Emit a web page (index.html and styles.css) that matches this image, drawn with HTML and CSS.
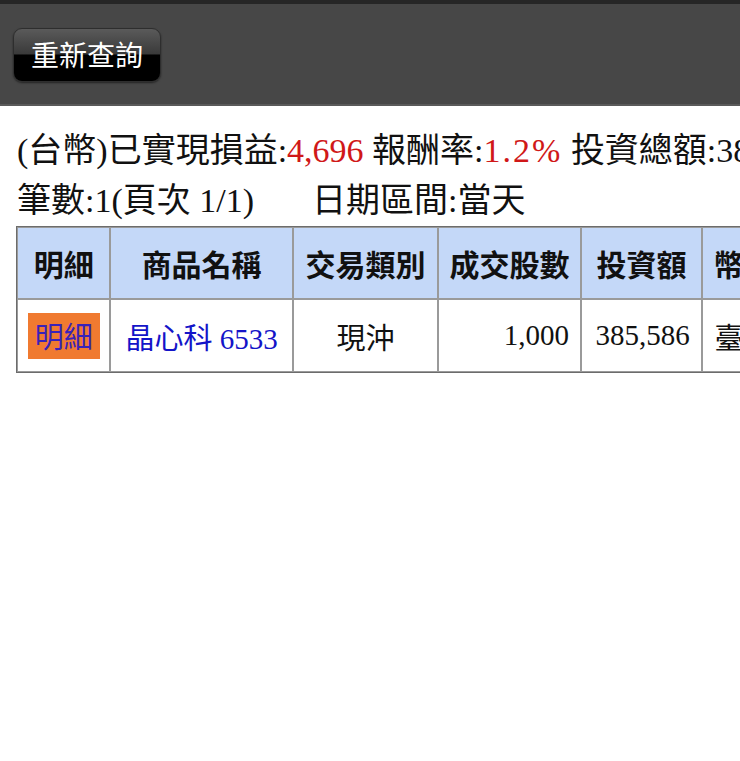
FILE: index.html
```html
<!DOCTYPE html>
<html lang="zh-Hant">
<head>
<meta charset="utf-8">
<title>已實現損益</title>
<link rel="stylesheet" href="styles.css">
</head>
<body>
<div class="topbar">
  <button class="query-btn" type="button">重新查詢</button>
</div>
<div class="content">
  <div class="summary">(台幣)已實現損益:<span class="red">4,696</span> 報酬率:<span class="red pct">1.2%</span> 投資總額:385,586</div>
  <div class="summary">筆數:1(頁次 1/1)<span class="range">日期區間:當天</span></div>
  <table class="grid">
    <thead>
      <tr>
        <th class="c1">明細</th>
        <th class="c2">商品名稱</th>
        <th class="c3">交易類別</th>
        <th class="c4">成交股數</th>
        <th class="c5">投資額</th>
        <th class="c6">幣別</th>
      </tr>
    </thead>
    <tbody>
      <tr>
        <td class="center"><span class="detail">明細</span></td>
        <td class="center"><span class="link">晶心科 6533</span></td>
        <td class="center">現沖</td>
        <td class="right">1,000</td>
        <td class="right">385,586</td>
        <td class="center">臺幣</td>
      </tr>
    </tbody>
  </table>
</div>
</body>
</html>
```

FILE: styles.css
```css
html, body {
  margin: 0;
  padding: 0;
  background: #ffffff;
  overflow: hidden;
}
body {
  font-family: "Liberation Serif", "Noto Sans CJK TC", serif;
  color: #111111;
  width: 740px;
}
.topbar {
  background: #474747;
  border-top: 4px solid #262626;
  border-bottom: 2px solid #5a5a5a;
  box-sizing: border-box;
  height: 106px;
  padding: 24px 0 0 13px;
}
.query-btn {
  width: 148px;
  height: 54px;
  border-radius: 9px;
  border: 1px solid #2e2e2e;
  background: linear-gradient(#5a5a5a 0%, #3a3a3a 48%, #000000 50%, #000000 100%);
  color: #ffffff;
  font-family: "Noto Sans CJK TC", sans-serif;
  font-size: 28px;
  line-height: 1;
  padding: 0 0 2px 0;
  box-shadow: 0 1px 2px rgba(0,0,0,0.5);
}
.content {
  padding: 20px 0 0 16px;
}
.summary {
  font-size: 34px;
  line-height: 50px;
  white-space: nowrap;
  padding-left: 1px;
}
.red {
  color: #d01818;
}
.pct {
  letter-spacing: 2px;
}
.range {
  margin-left: 58px;
}
.grid {
  border-collapse: separate;
  border-spacing: 0;
  border: 1px solid #6c6c6c;
  table-layout: fixed;
  width: 770px;
  font-size: 29px;
}
.grid th, .grid td {
  border: 1px solid #9a9a9a;
  padding: 0;
  white-space: nowrap;
  overflow: hidden;
}
.grid th {
  background: #c4d8f8;
  height: 70px;
  font-family: "Noto Sans CJK TC", sans-serif;
  font-weight: 700;
  font-size: 30px;
  text-align: center;
}
.grid td {
  height: 71px;
}
.c1 { width: 90px; }
.c2 { width: 178px; }
.c3 { width: 141px; }
.c4 { width: 139px; }
.c5 { width: 117px; }
.c6 { width: 80px; }
.center { text-align: center; }
.right { text-align: right; padding-right: 11px !important; }
.detail {
  display: inline-block;
  width: 72px;
  height: 46px;
  line-height: 44px;
  background: #f07a30;
  color: #3a22b8;
  font-family: "Noto Sans CJK TC", sans-serif;
  font-size: 29px;
  vertical-align: middle;
}
.link {
  color: #1414c8;
}
```
